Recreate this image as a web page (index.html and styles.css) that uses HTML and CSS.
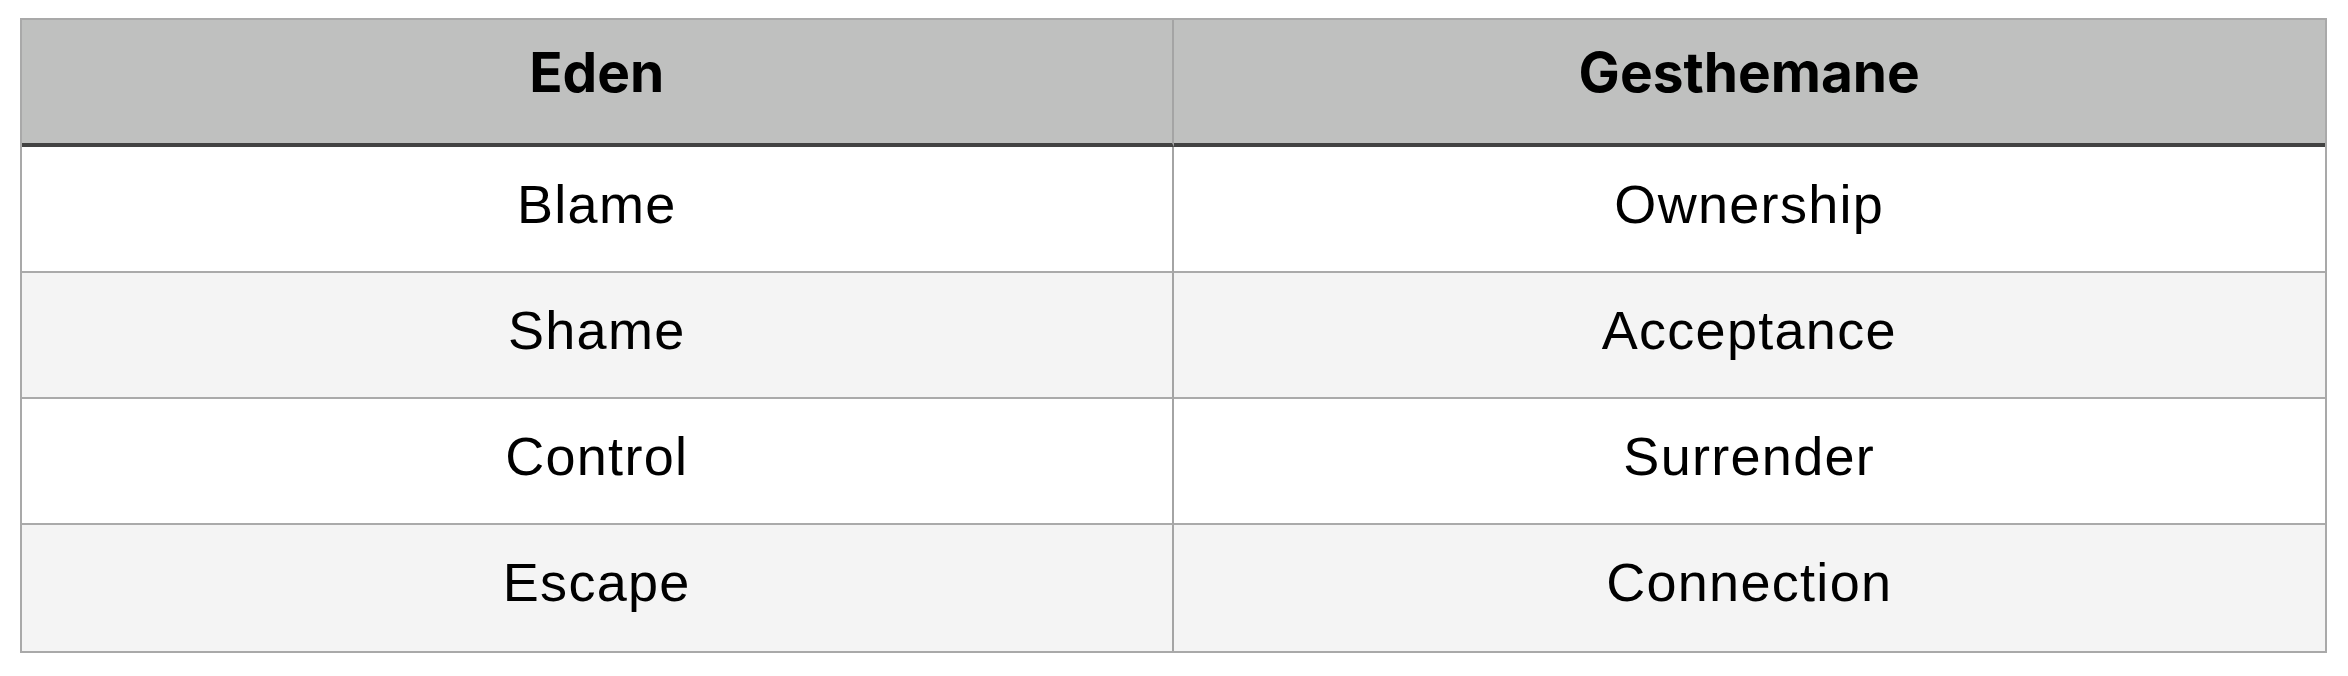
FILE: index.html
```html
<!DOCTYPE html>
<html>
<head>
<meta charset="utf-8">
<link rel="stylesheet" href="styles.css">
</head>
<body>
<div class="table">
  <div class="cell head">Eden</div>
  <div class="cell head">Gesthemane</div>
  <div class="cell body">Blame</div>
  <div class="cell body">Ownership</div>
  <div class="cell body alt">Shame</div>
  <div class="cell body alt">Acceptance</div>
  <div class="cell body">Control</div>
  <div class="cell body">Surrender</div>
  <div class="cell body alt last">Escape</div>
  <div class="cell body alt last">Connection</div>
</div>
</body>
</html>
```
FILE: styles.css
```css
html, body {
  margin: 0;
  padding: 0;
  background: #ffffff;
}
body {
  padding: 18px 20px 0 20px;
}
.table {
  width: 2307px;
  box-sizing: border-box;
  display: grid;
  grid-template-columns: 1fr 1fr;
  border: 2px solid #a9a9a9;
}
.cell {
  box-sizing: border-box;
  text-align: center;
  color: #000;
}
.cell:nth-child(odd) {
  border-right: 2px solid #a4a4a4;
}
.head {
  height: 127px;
  background: #bfc0bf;
  border-bottom: 4px solid #424242;
  padding-top: 19px;
  font-family: Inter, "Liberation Sans", sans-serif;
  font-weight: 700;
  font-size: 55px;
  line-height: 67px;
}
.body {
  height: 126px;
  background: #ffffff;
  border-bottom: 2px solid #aaaaaa;
  padding-top: 27px;
  font-family: "Liberation Sans", Arial, sans-serif;
  font-size: 54px;
  line-height: 60px;
  letter-spacing: 1.3px;
}
.alt {
  background: #f4f4f4;
}
.last {
  border-bottom: none;
}
```
